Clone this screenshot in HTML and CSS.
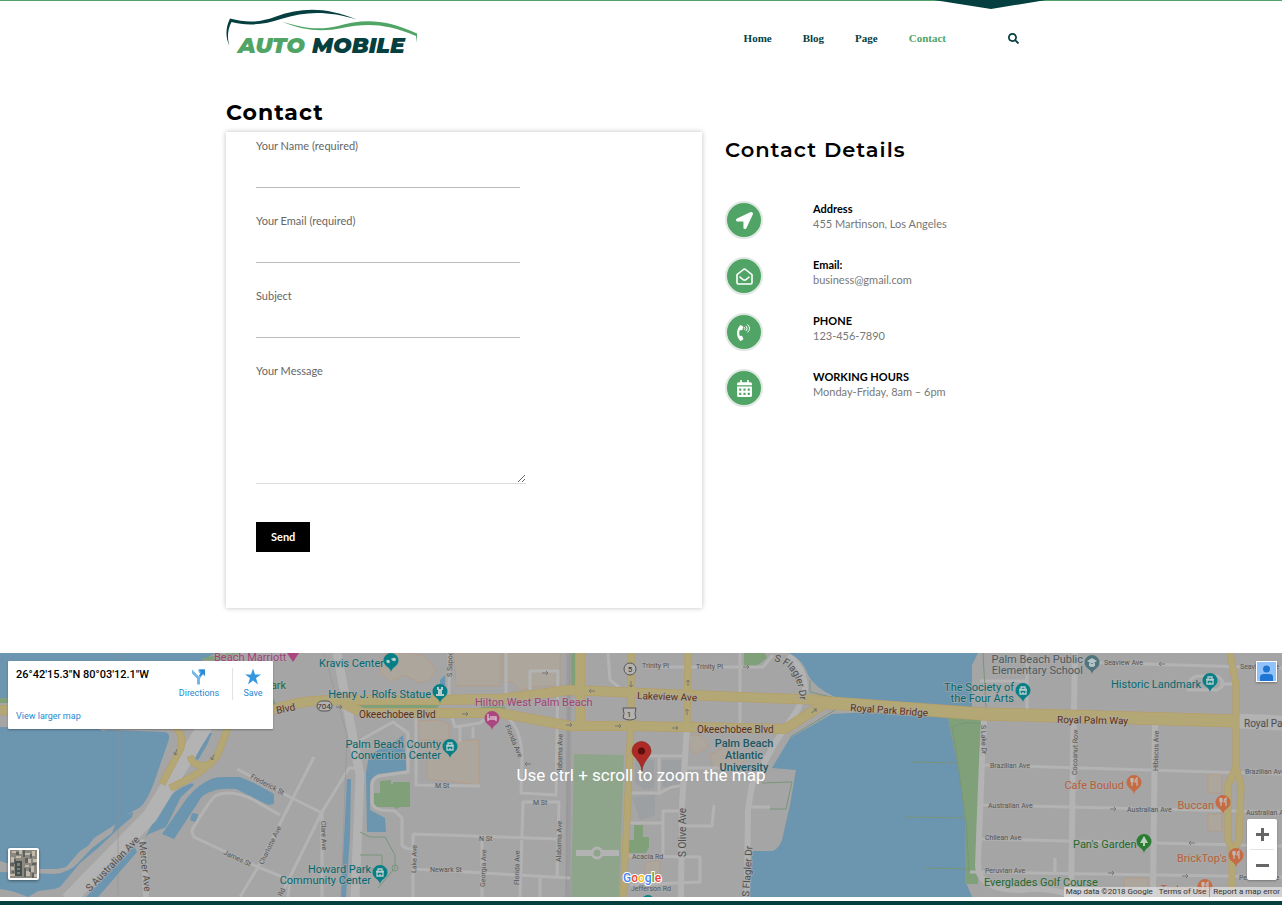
FILE: index.html
```html
<!DOCTYPE html>
<html lang="en">
<head>
<meta charset="utf-8">
<meta name="viewport" content="width=device-width, initial-scale=1">
<title>Contact – Auto Mobile</title>
<link rel="stylesheet" href="styles.css">
</head>
<body>
<header class="site-header">
  <svg class="header-tab" viewBox="0 0 112 9" aria-hidden="true"><path d="M0 0H112L57 9Z" fill="#053f3f"/></svg>
  <div class="container header-row">
    <a class="logo" href="#" aria-label="Auto Mobile">
      <svg viewBox="0 0 192 46" class="logo-art">
        <path fill="#053f3f" d="M3.500 37C-.8 28-.5 19 4 9.500C22 14.500 35 13 50 7.500C76-2 100-2 131 10.500C102 1.800 80 2 55 10C38 16 20 17 5.500 13C1.500 21 1 28 3.500 37Z"/>
        <path fill="#50a566" d="M56 12.500C80 20 94 21 112 17C136 10 158 9 191 24.500V34L190 27C160 14 140 14 116 19C96 23 78 22 56 12.500Z"/>
        <text class="logo-word logo-auto" x="12" y="44">AUTO</text>
        <text class="logo-word logo-mobile" x="86" y="44">MOBILE</text>
      </svg>
    </a>
    <nav class="nav">
      <a href="#">Home</a><a href="#">Blog</a><a href="#">Page</a><a href="#" class="active">Contact</a>
      <button class="search" type="button" aria-label="Search"><svg viewBox="0 0 512 512"><path d="M505 442.700L405.300 343c-4.500-4.500-10.600-7-17-7H372c27.600-35.300 44-79.700 44-128C416 93.100 322.900 0 208 0S0 93.100 0 208s93.100 208 208 208c48.300 0 92.700-16.400 128-44v16.300c0 6.400 2.500 12.500 7 17l99.700 99.700c9.400 9.400 24.600 9.400 33.900 0l28.300-28.300c9.400-9.400 9.400-24.600.1-34zM208 336c-70.700 0-128-57.200-128-128 0-70.700 57.200-128 128-128 70.700 0 128 57.200 128 128 0 70.700-57.200 128-128 128z"/></svg></button>
    </nav>
  </div>
</header>

<main>
  <div class="container">
    <h1>Contact</h1>
    <div class="columns">
      <form class="card" onsubmit="return false">
        <label for="name">Your Name (required)</label>
        <input id="name" type="text">
        <label for="email">Your Email (required)</label>
        <input id="email" type="email">
        <label for="subject">Subject</label>
        <input id="subject" type="text">
        <label for="message">Your Message</label>
        <textarea id="message"></textarea>
        <button class="send" type="submit">Send</button>
      </form>
      <section class="details">
        <h2>Contact Details</h2>
        <ul class="detail-list">
          <li><span class="badge"><svg viewBox="0 0 512 512"><path fill="#fff" d="M444.520 3.520L28.740 195.420c-47.970 22.390-31.980 92.750 19.190 92.750h175.910v175.910c0 51.170 70.360 67.170 92.750 19.190l191.900-415.780c15.990-38.390-25.590-79.970-63.970-63.970z"/></svg></span><div><strong>Address</strong><span>455 Martinson, Los Angeles</span></div></li>
          <li><span class="badge"><svg viewBox="0 0 17 17" fill="none" stroke="#fff" stroke-width="1.600" stroke-linejoin="round" stroke-linecap="round"><path d="M1 6.700V14.800Q1 16 2.200 16H14.800Q16 16 16 14.800V6.700L10.200 2Q8.500.4 6.800 2Z"/><path d="M4 9.200L7 11.600Q8.500 12.700 10 11.600L13 9.200"/></svg></span><div><strong>Email:</strong><span>business@gmail.com</span></div></li>
          <li><span class="badge"><svg viewBox="-30 0 512 512"><path fill="#fff" d="M97.333 506.966c-129.874-129.874-129.681-340.252 0-469.933 5.698-5.698 14.527-6.632 21.263-2.422l64.817 40.513a17.187 17.187 0 0 1 6.849 20.958l-32.408 81.021a17.188 17.188 0 0 1-17.669 10.719l-55.810-5.580c-21.051 58.261-20.612 122.471 0 179.515l55.811-5.581a17.188 17.188 0 0 1 17.669 10.719l32.408 81.022a17.188 17.188 0 0 1-6.849 20.958l-64.817 40.513a17.190 17.190 0 0 1-21.264-2.422z"/><path d="M228 105Q258 133 228 162M278 65Q345 133 278 202M326 22Q438 133 326 245" fill="none" stroke="#fff" stroke-width="30" stroke-linecap="round"/></svg></span><div><strong>PHONE</strong><span>123-456-7890</span></div></li>
          <li><span class="badge"><svg viewBox="0 0 16 16"><path fill="#fff" fill-rule="evenodd" d="M4 0H5.500V2H10.500V0H12V2H13.500Q15 2 15 3.500V5H1V3.500Q1 2 2.500 2H4ZM1 6H15V14.500Q15 16 13.500 16H2.500Q1 16 1 14.500ZM3 8V10H5V8ZM7 8V10H9V8ZM11 8V10H13V8ZM3 12V14H5V12ZM7 12V14H9V12ZM11 12V14H13V12Z"/></svg></span><div><strong>WORKING HOURS</strong><span>Monday-Friday, 8am – 6pm</span></div></li>
        </ul>
      </section>
    </div>
  </div>

  <section class="map" aria-label="Map">
    <svg class="map-art" viewBox="0 653 1282 244">
      <defs>
        <path id="pin" d="M0 10C-1 5-7.500 4-7.500-1.500A7.500 7.500 0 1 1 7.500-1.500C7.500 4 1 5 0 10Z"/>
        <path id="fork" fill="none" stroke="#c4b8b3" stroke-width="1.200" d="M-3-5V-2Q-3-1-2-1T-1-2V-5M-2-5V3M3 3V-5Q1-4 1-1H3"/>
        <path id="house" fill="none" stroke="#b9cccc" stroke-width="1.300" d="M-3 3V-1H3V3ZM-4-1.500H4M-2-2V-4H2V-2M0 3V1"/>
        <path id="arrow" d="M-3 0H3M1-2L3 0L1 2" fill="none" stroke="#777" stroke-width="1"/>
      </defs>
      <rect y="653" width="1282" height="244" fill="#a5a5a5"/>
      <g class="water">
        <path d="M0 653H215L190 668L100 696L0 699Z"/>
        <path d="M0 727L98 729L103 731L108 730L165 732Q170 733 169 739L158 771Q148 802 139 808L118 819L116 824L94 838L88 846L80 851L66 867L57 869L39 869Q20 868 0 861Z"/>
        <path d="M0 872L55 874Q70 872 78 863L92 848L112 833L118 818L133 812L132 817L117 830L98 848L80 863L60 887L54 889L38 891L28 897Q12 890 0 889Z"/>
        <path d="M145 838L163 803Q175 789 192 783L194 785L181 797L166 827L149 834Z"/>
        <path d="M162 834L187 798Q205 777 222 777H240L254 783L274 794L274 804L268 805L236 789Q220 788 213 791Q202 794 199 801L174 839Z"/>
        <path d="M195 759L207 733L212 733L207 745L198 760ZM190 820L192 813L198 814L197 823ZM86 897L134 846L137 852L98 897Z"/>
        <path d="M347 779H351L350 835L346 897H341Z"/>
        <path d="M366 773L369 755L397 740L403 735L407 770L378 774Q370 778 370 784V810L385 818L386 832L367 832Z"/>
        <path d="M440 680L445 675V700H440ZM788 653Q802 658 808 675Q815 688 835 697L870 712L832 714L790 738L772 768L796 770L790 805L782 840Q779 848 773 851L752 851L749 897H972L965 880V820L959 770L948 718L972 707V665L978 653Z"/>
      </g>
      <g fill="#7fa079">
        <path d="M948 718H981L980 780L976 880H965V820L959 770ZM744 653H765L767 658L755 667H744ZM374 793H380V781L391 780V784H393V782H410V807H400L396 809L394 807H374ZM355 704H440L436 710H355ZM481 706H505V712L490 711H481ZM571 653H576V686H571ZM634 825H643V837H649V847L646 853H629V840H634ZM200 660Q215 653 240 653L225 661ZM0 698H8V703H0ZM272 697L276 704L272 706ZM965 876H978V884H965Z"/>
        <path d="M574 754L624 755L619 897H571Z" fill="#8fa58b"/>
      </g>
      <g fill="#ada69d" stroke="#b79a82" stroke-width=".7">
        <path d="M385 653H410L425 656L436 670L430 680L420 683L405 675L391 681L380 672ZM454 653H500V686H456ZM503 653H560V686H541L520 690L512 682H503ZM418 721L438 720L449 724V740H420ZM427 743L479 740V785L427 779ZM689 735L703 736L708 747L696 755L690 748ZM710 755L725 747L748 758L735 768H713ZM645 863L660 860V874H645ZM1208 774H1222V793H1208ZM1208 814H1222V831H1208ZM1124 878H1148V897H1124Z"/>
      </g>
      <g fill="#9da0a3"><path d="M635 760H654V788L645 790L635 783ZM662 760H681V788L670 790L662 785ZM632 797L655 794V815L640 820Z"/></g>
      <path class="strip" d="M569 653L568 897"/>
      <g class="street thin">
        <path d="M237 769L290 797L322 813M280 815L250 798Q228 789 215 796Q208 803 192 830Q192 836 196 838L258 867L290 880M240 897L258 867L292 800L314 757M280 897L322 812L349 768H356M322 812V897M290 880L288 897"/>
        <path d="M416 716V785L480 786M350 746L375 732L393 722L408 733V772L380 776Q372 778 372 785V802Q373 809 382 810L395 811L402 818V845Q405 849 412 849M413 834L558 839M413 834V897M413 869L570 878M482 839V897M508 718Q522 730 522 760L521 793L556 795L558 671H530V690M560 802H523L520 897M559 802L557 878M540 878V897M608 653L610 680L619 687M643 667H740L763 667L773 655M635 756H682M630 793H660Q672 785 682 786M659 795V758M627 823L663 823V811H680M663 823V855M625 856L700 857V882L630 885M680 826H712L714 805M687 768H745M740 653V725M449 653V698M506 653V700M449 709L455 727L480 723L490 715M460 727V742M473 727V738"/>
        <path d="M980 681H1028M1027 653V709M1075 662L1282 668M983 765L1282 774M982 805L1282 812M980 839L1282 846M970 872L1282 877M1055 858V873M748 807H770M1200 676H1217Q1229 684 1217 690H1188Q1188 676 1200 676M1220 684H1235"/>
        <path class="avenue" d="M576 853H592M602 853H619"/>
      </g>
      <circle cx="597" cy="853" r="5" class="street"/>
      <g class="street avenue"><path d="M687 728L682 805L681 897M788 656Q805 667 805 690L798 709L775 743L752 785L748 810L747 897M984 720L982 760L978 865Q978 890 1020 890Q1050 886 1075 897M1075 653L1073 760L1071 897M1155 725L1153 897M141 840L144 852L146 897"/></g>
      <path class="street main" d="M337 653L350 722L360 775L355 897"/>
      <path class="street wide" d="M1238 721L1282 723M209 720L150 816L68 900"/>
      <g class="rail"><path d="M324 653L337 700L347 735L341 897M570 653L566 897M118 653V897"/></g>
      <g class="green-line"><path d="M360 832L370 837H385L395 855V868L378 888M360 869H388M382 869V855H360M912 762L959 763M905 817L966 818M924 868L969 869M983 653L986 707M952 727L958 765L966 822L969 872M953 727Q965 720 981 724M762 783L792 782L786 809H770M810 680V692L835 698M790 737L835 710"/><circle cx="395" cy="868" r="3"/></g>
      <g class="road-edge"><path class="r10" d="M0 710L200 716L273 710Q300 699 343 700H435L500 699L570 690L640 693L740 697L820 700"/><path class="r10" d="M343 703L363 713H500L570 726H630L785 729L824 704"/><path class="r12" d="M815 702L845 704L983 714L1100 717L1236 721"/><path class="r10" d="M580 653V727"/><path class="r7" d="M631 653V720L627 820L623 897M688 653L687 727"/><path class="r7" d="M1230 653L1236 685V767L1228 785V840L1232 850V897M1236 767L1241 785L1239 840L1232 855"/><path class="r7" d="M175 727Q184 735 181 748L162 784M228 727L218 754Q208 771 170 788M190 756Q194 768 207 765"/></g>
      <g class="road"><path class="r10" d="M0 710L200 716L273 710Q300 699 343 700H435L500 699L570 690L640 693L740 697L820 700"/><path class="r10" d="M343 703L363 713H500L570 726H630L785 729L824 704"/><path class="r12" d="M815 702L845 704L983 714L1100 717L1236 721"/><path class="r10" d="M580 653V727"/><path class="r7" d="M631 653V720L627 820L623 897M688 653L687 727"/><path class="r7" d="M1230 653L1236 685V767L1228 785V840L1232 850V897M1236 767L1241 785L1239 840L1232 855"/><path class="r7" d="M175 727Q184 735 181 748L162 784M228 727L218 754Q208 771 170 788M190 756Q194 768 207 765"/></g>
      <g>
        <use href="#arrow" x="339" y="707"/><use href="#arrow" x="465" y="714"/><use href="#arrow" x="569" y="725"/><use href="#arrow" x="618" y="726"/><use href="#arrow" x="675" y="728"/><use href="#arrow" x="545" y="673"/><use href="#arrow" x="746" y="667"/><use href="#arrow" transform="translate(592 691) rotate(180)"/><use href="#arrow" transform="translate(631 684) rotate(90)"/><use href="#arrow" transform="translate(688 683) rotate(-90)"/><use href="#arrow" transform="translate(687 712) rotate(-90)"/><use href="#arrow" transform="translate(814 711) rotate(-40)"/><use href="#arrow" transform="translate(176 752) rotate(110)"/><use href="#arrow" transform="translate(213 757) rotate(120)"/><use href="#arrow" x="1113" y="809"/><use href="#arrow" x="1111" y="873"/><use href="#arrow" x="1185" y="876"/><use href="#arrow" transform="translate(1192 843) rotate(180)"/><use href="#arrow" transform="translate(1162 664) rotate(180)"/><use href="#arrow" transform="translate(528 764) rotate(180)"/>
      </g>
      <g class="shield"><rect x="317" y="701" width="15" height="10" rx="5"/><circle cx="630" cy="669" r="6"/><path d="M623 708H636Q634 714 636 718Q634 720 630 720T623 718Q625 714 623 708Z"/></g>
      <g class="shield-text"><text x="324" y="709">704</text><text x="630" y="672">5</text><text x="629" y="717">1</text></g>

      <g class="lbl hwy">
        <text x="359" y="718">Okeechobee Blvd</text><text x="637" y="699" transform="rotate(2 637 699)">Lakeview Ave</text><text x="697" y="733">Okeechobee Blvd</text><text x="850" y="711" transform="rotate(4 850 711)">Royal Park Bridge</text><text x="1057" y="723" transform="rotate(1 1057 723)">Royal Palm Way</text><text x="277" y="714" transform="rotate(-12 277 714)">Blvd</text>
      </g>
      <g class="lbl poi">
        <text x="319" y="667">Kravis Center</text><text x="431" y="698" text-anchor="end">Henry J. Rolfs Statue</text><text x="441" y="748" text-anchor="end">Palm Beach County</text><text x="441" y="759" text-anchor="end">Convention Center</text><text x="371" y="873" text-anchor="end">Howard Park</text><text x="371" y="884" text-anchor="end">Community Center</text><text x="1014" y="691" text-anchor="end">The Society of</text><text x="1014" y="702" text-anchor="end">the Four Arts</text><text x="1201" y="688" text-anchor="end">Historic Landmark</text>
      </g>
      <g class="lbl uni"><text x="744" y="747">Palm Beach</text><text x="744" y="759">Atlantic</text><text x="744" y="771">University</text></g>
      <g class="lbl school"><text x="1083" y="663">Palm Beach Public</text><text x="1083" y="674">Elementary School</text></g>
      <g class="lbl hotel"><text x="214" y="661">Beach Marriott</text><text x="475" y="706">Hilton West Palm Beach</text></g>
      <g class="lbl food"><text x="1124" y="789">Cafe Boulud</text><text x="1214" y="809">Buccan</text><text x="1227" y="862">BrickTop's</text><text x="1194" y="893">Trabox</text></g>
      <g class="lbl park"><text x="1073" y="848">Pan's Garden</text><text x="984" y="886">Everglades Golf Course</text><text x="264" y="689">Park</text></g>
      <g class="lbl big">
        <text x="1244" y="727">Royal Palm</text><text transform="translate(90 892) rotate(-46)">S Australian Ave</text><text transform="translate(139 842) rotate(84)">Mercer Ave</text><text transform="translate(686 857) rotate(-90)">S Olive Ave</text><text transform="translate(749 897) rotate(-86)">S Flagler Dr</text>
        <path id="flagler" d="M774 661Q801 666 800 710" fill="none" stroke="none"/><text><textPath href="#flagler">S Flagler Dr</textPath></text>
      </g>
      <g class="lbl st">
        <text x="642" y="668">Trinity Pl</text><text x="696" y="669">Trinity Pl</text><text x="435" y="788">M St</text><text x="533" y="805">M St</text><text x="479" y="841">N St</text><text x="430" y="872">Newark St</text><text x="632" y="859">Acacia Rd</text><text x="631" y="891">Jefferson Rd</text><text x="990" y="768">Brazilian Ave</text><text x="988" y="808">Australian Ave</text><text x="985" y="840">Chilean Ave</text><text x="985" y="873">Peruvian Ave</text><text x="1127" y="812">Australian Ave</text><text x="1245" y="774">Brazilian Ave</text><text x="1246" y="815">Australian Ave</text><text x="1239" y="880">Peruvian Ave</text><text x="1104" y="665">Seaview Ave</text><text x="1240" y="669">Seaview Ave</text>
        <text transform="translate(250 778) rotate(28)">Frederick St</text><text transform="translate(223 854) rotate(25)">James St</text><text transform="translate(263 865) rotate(-64)">Charlotte Ave</text><text transform="translate(321 821) rotate(88)">Clare Ave</text><text transform="translate(416 873) rotate(-88)">Lake Ave</text><text transform="translate(485 887) rotate(-88)">Georgia Ave</text><text transform="translate(519 885) rotate(-89)">Florida Ave</text><text transform="translate(505 726) rotate(67)">Florida Ave</text><text transform="translate(562 775) rotate(-89)">Alabama Ave</text><text transform="translate(561 862) rotate(-89)">Alabama Ave</text><text transform="translate(452 677) rotate(-89)">S Sapodilla</text><text transform="translate(981 725) rotate(88)">S Lake Dr</text><text transform="translate(1077 775) rotate(-89)">Cocoanut Row</text><text transform="translate(1158 771) rotate(-89)">Hibiscus Ave</text><text transform="translate(282 897) rotate(-65)">Rd</text>
      </g>

      <g fill="#087f86"><use href="#pin" x="391" y="662"/><use href="#pin" x="440" y="693"/><use href="#pin" x="450" y="748"/><use href="#pin" x="380" y="874"/><use href="#pin" x="1023" y="692"/><use href="#pin" x="1210" y="682"/><circle cx="648" cy="902" r="7"/></g>
      <use href="#house" x="450" y="747"/><use href="#house" x="380" y="873"/><use href="#house" x="1023" y="691"/><use href="#house" x="1210" y="681"/>
      <path d="M386 661Q389 658 390 662Q388 665 386 661M391 659Q396 656 396 660Q394 663 391 659M437 687V690H438V694H436V696H444V694H442V690H443V687H441V689H439V687Z" fill="#b9cccc"/>
      <g fill="#ac467f"><use href="#pin" x="492" y="720"/><path d="M287 653H299L293 662Z"/></g><path d="M488 714V721M488 719H496V721M490 717H496V719" fill="none" stroke="#d5b9c9" stroke-width="1.500"/>
      <use href="#pin" x="1092" y="664" fill="#50747c"/><path d="M1087 661L1092 658L1097 661L1092 664ZM1089 663V666Q1092 668 1095 666V663" fill="#b5c4c8"/>
      <g fill="#c56c44"><use href="#pin" x="1134" y="784"/><use href="#pin" x="1223" y="804"/><use href="#pin" x="1236" y="857"/><use href="#pin" x="1205" y="888"/></g>
      <use href="#fork" x="1134" y="783"/><use href="#fork" x="1223" y="803"/><use href="#fork" x="1236" y="856"/><use href="#fork" x="1205" y="887"/>
      <use href="#pin" x="1144" y="843" fill="#2c7d34"/><path d="M1144 836L1148 843H1145V846H1143V843H1140Z" fill="#bfcfbf"/>
      <path d="M642 771C641 760 632 757 632 751A9.500 9.500 0 1 1 651 751C651 757 643 760 642 771Z" fill="#ad2a26" stroke="#8b1f1b" stroke-width=".6"/><circle cx="641.500" cy="751" r="3.500" fill="#5a0f0d"/>
      <text class="google" x="642" y="882"><tspan fill="#4285f4">G</tspan><tspan fill="#ea4335">o</tspan><tspan fill="#fbbc05">o</tspan><tspan fill="#4285f4">g</tspan><tspan fill="#34a853">l</tspan><tspan fill="#ea4335">e</tspan></text>
    </svg>

    <p class="map-hint">Use ctrl + scroll to zoom the map</p>

    <div class="place">
      <div class="place-main"><strong>26°42'15.3"N 80°03'12.1"W</strong><a href="#">View larger map</a></div>
      <a class="place-action" href="#"><svg viewBox="0 0 16 16"><path d="M6 16V10L1 5V1L8 8L10 6L8 4L7 1H14V8L12 6L9 10V16Z" fill="#76b7e8"/><path d="M8 1H14V7L12 5L9 8L8 7L10 4Z" fill="#2b8ad6"/></svg>Directions</a>
      <a class="place-action save" href="#"><svg viewBox="0 0 16 16"><path d="M8 0L10 6H16L11 9.500L13 16L8 12L3 16L5 9.500L0 6H6Z" fill="#3498e0"/></svg>Save</a>
    </div>

    <button class="avatar" type="button" aria-label="Account"><svg viewBox="0 0 19 19"><path fill="#91c2fb" d="M0 0H19V19H0Z"/><circle cx="9.500" cy="7" r="3.500" fill="#1f76d2"/><path d="M3 19V15Q3 12 7 12H12Q16 12 16 15V19Z" fill="#1f76d2"/></svg></button>

    <button class="satellite" type="button" aria-label="Satellite view"><svg viewBox="0 0 27 28"><path fill="#8b8880" d="M0 0H27V28H0Z"/><path fill="#c2b9aa" d="M2 1h4v2H2zM9 0h3v4H9zM15 3h5v2h-5zM22 1h3v5h-3zM1 7h3v5H1zM18 9h3v4h-3zM23 9h4v3h-4zM15 15h4v2h-4zM21 16h3v6h-3zM16 21h4v5h-4zM1 17h3v3H1zM0 24h5v2H0zM24 24h3v3h-3zM6 6h5v2H6z"/><path fill="#5d6261" d="M6 2h3v3H6zM13 0h2v7h-2zM20 4h2v4h-2zM4 9h2v5H4zM15 8h3v5h-3zM22 13h4v2h-4zM19 18h2v4h-2zM0 13h4v3H0zM14 18h2v9h-2zM22 23h2v5h-2zM2 21h2v2H2z"/><path fill="#454f4b" d="M5 11h7v15H5z"/><path fill="#77827b" d="M7 13h3v3H7zM7 18h3v2H7zM7 22h3v2H7z"/></svg></button>

    <div class="zoom"><button type="button" aria-label="Zoom in"><svg viewBox="0 0 13 13"><path d="M5 0H8V5H13V8H8V13H5V8H0V5H5Z"/></svg></button><button type="button" aria-label="Zoom out"><svg viewBox="0 0 13 13"><path d="M0 5H13V8H0Z"/></svg></button></div>

    <div class="credits"><span>Map data ©2018 Google</span><a href="#">Terms of Use</a><a href="#" class="report">Report a map error</a></div>
  </section>
</main>
<footer class="site-footer"></footer>
</body>
</html>
```

FILE: styles.css
```css
* { box-sizing: border-box; }
body { margin: 0; background: #fff; color: #777; font: 11px/15px Lato, sans-serif; }
a { text-decoration: none; color: inherit; }
button { font: inherit; cursor: pointer; border: 0; padding: 0; }
svg { display: block; }

.container { max-width: 830px; margin: 0 auto; }

.site-header { position: relative; border-top: 1px solid #50a566; padding-top: 8px; }
.header-tab { position: absolute; top: -1px; right: 236px; width: 112px; height: 9px; }
.header-row { display: flex; justify-content: space-between; align-items: flex-start; padding-right: 37px; }
.logo-art { width: 192px; height: 46px; overflow: visible; }
.logo-word { font: italic 900 22px Montserrat, Inter, sans-serif; }
.logo-auto { fill: #50a566; }
.logo-mobile { fill: #053f3f; }
.nav { display: flex; align-items: center; gap: 31px; padding-top: 22px; font: bold 11px/15px "Liberation Serif", serif; color: #053f3f; }
.nav .active { color: #50a566; }
.search { width: 11px; height: 11px; margin-left: 31px; background: none; }
.search svg { width: 11px; height: 11px; fill: #053f3f; }

h1, h2 { color: #000; font-family: Montserrat, Inter, sans-serif; line-height: 30px; letter-spacing: 1px; }
h1 { margin: 43px 0 4px; font-size: 22px; font-weight: 700; }
h2 { margin: 3px 0 36px; font-size: 21px; font-weight: 600; }

.columns { display: grid; grid-template-columns: 476fr 331fr; gap: 23px; align-items: start; }
.card { display: flex; flex-direction: column; align-items: flex-start; padding: 6px 30px 56px; background: #fff; box-shadow: 0 0 5px rgba(0, 0, 0, .25); }
.card label { color: #666; }
.card input, .card textarea { border: 0; border-bottom: 1px solid #bbb; padding: 4px; background: none; font: inherit; color: #333; outline: 0; }
.card input { width: 264px; height: 35px; margin-bottom: 25px; }
.card textarea { width: 270px; height: 106px; margin-bottom: 38px; border-color: #ddd; }
.send { padding: 7px 15px 8px; background: #000; color: #fff; font-weight: 700; }

.detail-list { list-style: none; margin: 0; padding: 0; display: grid; gap: 18px; }
.detail-list li { display: grid; grid-template-columns: 38px 1fr; gap: 50px; }
.detail-list strong, .detail-list div span { display: block; }
.detail-list strong { color: #000; }
.badge { display: flex; align-items: center; justify-content: center; height: 38px; border: 2px solid #e1e8e3; border-radius: 50%; background: #50a566; }
.badge svg { width: 17px; height: 17px; }

.map { position: relative; margin: 45px 0 4px; font-family: Roboto, sans-serif; }
.map-art { width: 100%; height: auto; }
.water { fill: #6c95af; }
.street { fill: none; stroke: #b3b3b3; stroke-linejoin: round; }
.thin { stroke-width: 3px; }
.avenue { stroke-width: 6px; }
.main { stroke-width: 9px; }
.wide { stroke-width: 15px; }
circle.street { stroke-width: 3px; }
.strip { stroke: #9c9c9e; stroke-width: 5px; }
.rail { fill: none; stroke: #959595; stroke-width: 1px; opacity: .6; }
.green-line { fill: none; stroke: #78967a; stroke-width: 1px; }
.road, .road-edge { fill: none; stroke: #b2a775; stroke-linejoin: round; }
.road-edge { stroke: #b99b60; }
.road .r7 { stroke-width: 6px; }
.road .r10 { stroke-width: 9px; }
.road .r12 { stroke-width: 12px; }
.road-edge .r7 { stroke-width: 7px; }
.road-edge .r10 { stroke-width: 10px; }
.road-edge .r12 { stroke-width: 13px; }
.shield { fill: #b2b2b2; stroke: #555; stroke-width: 1px; }
.shield-text { font-size: 8px; text-anchor: middle; fill: #333; }
.lbl { font-size: 11px; stroke: #acacac; stroke-width: 2px; stroke-opacity: .6; paint-order: stroke; }
.hwy { fill: #5c2e18; font-size: 10px; }
.poi { fill: #05686f; }
.uni { fill: #205763; text-anchor: middle; font-weight: 500; }
.school { fill: #4c5a61; text-anchor: end; }
.hotel { fill: #a43f78; }
.food { fill: #b85f3a; text-anchor: end; }
.park { fill: #266a2d; }
.big { fill: #4e4e4e; font-size: 10px; }
.st { fill: #555; font-size: 7px; }
.google { font-size: 12px; font-weight: 500; text-anchor: middle; stroke: #fff; stroke-width: 2px; paint-order: stroke; }

.map-hint { position: absolute; inset: 0; display: flex; align-items: center; justify-content: center; margin: 0; color: #fff; font-size: 17px; line-height: 20px; pointer-events: none; }
.place { position: absolute; top: 8px; left: 8px; width: 265px; height: 68px; display: flex; padding: 7px 0 6px 8px; background: #fff; border-radius: 1px; box-shadow: 0 1px 2px rgba(0, 0, 0, .3); color: #258ad5; font-size: 9px; line-height: 13px; }
.place-main { flex: 1; display: flex; flex-direction: column; justify-content: space-between; }
.place-main strong { color: #000; font-size: 11px; font-weight: 500; white-space: nowrap; }
.place-action { width: 66px; height: 32px; display: flex; flex-direction: column; align-items: center; gap: 2px; }
.place-action svg { width: 16px; height: 17px; }
.save { width: 41px; border-left: 1px solid #e3e3e3; }
.avatar { position: absolute; top: 8px; right: 5px; width: 21px; height: 21px; padding: 1px; background: #fff; box-shadow: 0 1px 2px rgba(0, 0, 0, .3); }
.satellite { position: absolute; left: 8px; bottom: 17px; width: 31px; height: 32px; padding: 2px; background: #fff; border-radius: 2px; box-shadow: 0 1px 3px rgba(0, 0, 0, .4); }
.zoom { position: absolute; right: 5px; bottom: 17px; width: 30px; display: flex; flex-direction: column; background: #fff; border-radius: 2px; box-shadow: 0 1px 2px rgba(0, 0, 0, .3); }
.zoom button { height: 30px; margin: 0 3px; display: flex; align-items: center; justify-content: center; background: none; }
.zoom button + button { border-top: 1px solid #e3e3e3; height: 31px; }
.zoom svg { width: 13px; height: 13px; fill: #666; }
.credits { position: absolute; right: 0; bottom: 0; display: flex; padding: 0 2px; background: rgba(220, 220, 220, .8); color: #333; font-size: 8px; line-height: 10px; }
.credits a { padding: 0 3px; }
.credits a:first-of-type { padding-left: 6px; }
.credits .report { border-left: 1px solid #999; padding-right: 0; }

.site-footer { height: 4px; background: #063f40; }
```
